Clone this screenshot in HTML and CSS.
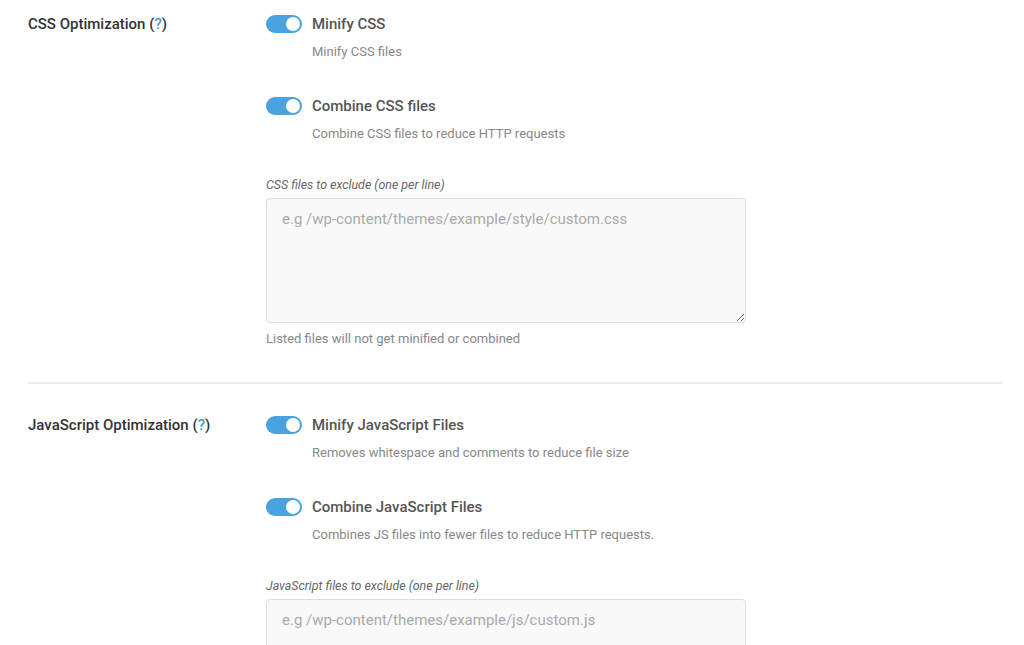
FILE: index.html
```html
<!doctype html>
<html>
    <head>
        <meta charset="utf-8">
        <title>Optimization settings</title>
        <link rel="stylesheet" href="styles.css">
    </head>
    <body>
        <div class="page">

            <section class="group first">
                <div class="group-label">CSS Optimization (<a href="#">?</a>)</div>
                <div class="group-body">
                    <div class="option">
                        <div class="option-head">
                            <span class="switch on"><span class="knob"></span></span>
                            <span class="option-title">Minify CSS</span>
                        </div>
                        <p class="option-desc">Minify CSS files</p>
                    </div>
                    <div class="option">
                        <div class="option-head">
                            <span class="switch on"><span class="knob"></span></span>
                            <span class="option-title">Combine CSS files</span>
                        </div>
                        <p class="option-desc">Combine CSS files to reduce HTTP requests</p>
                    </div>
                    <label class="field-label">CSS files to exclude (one per line)</label>
                    <textarea class="field" placeholder="e.g /wp-content/themes/example/style/custom.css"></textarea>
                    <p class="field-note">Listed files will not get minified or combined</p>
                </div>
            </section>

            <hr class="divider">

            <section class="group">
                <div class="group-label">JavaScript Optimization (<a href="#">?</a>)</div>
                <div class="group-body">
                    <div class="option">
                        <div class="option-head">
                            <span class="switch on"><span class="knob"></span></span>
                            <span class="option-title">Minify JavaScript Files</span>
                        </div>
                        <p class="option-desc">Removes whitespace and comments to reduce file size</p>
                    </div>
                    <div class="option">
                        <div class="option-head">
                            <span class="switch on"><span class="knob"></span></span>
                            <span class="option-title">Combine JavaScript Files</span>
                        </div>
                        <p class="option-desc">Combines JS files into fewer files to reduce HTTP requests.</p>
                    </div>
                    <label class="field-label">JavaScript files to exclude (one per line)</label>
                    <textarea class="field" placeholder="e.g /wp-content/themes/example/js/custom.js"></textarea>
                </div>
            </section>

        </div>
    </body>
</html>
```

FILE: styles.css
```css
*{
    margin: 0;
    padding: 0;
    box-sizing: border-box;
}
html,body{
    background: #fff;
    font-family: Roboto, "Liberation Sans", Arial, sans-serif;
    color: #333;
}
.page{
    padding: 0 22px 0 28px;
    height: 645px;
    overflow: hidden;
}
.group{
    display: flex;
    padding-top: 31px;
}
.group.first{
    padding-top: 14px;
}
.group-label{
    width: 238px;
    flex: none;
    font-size: 15px;
    font-weight: 500;
    line-height: 20px;
    color: #333;
}
.group-label a{
    color: #3a9ad9;
    text-decoration: none;
}
.group-body{
    flex: 1;
}
.option{
    margin-bottom: 35px;
}
.option-head{
    display: flex;
    align-items: center;
    gap: 10px;
    height: 20px;
}
.switch{
    position: relative;
    display: inline-block;
    width: 36px;
    height: 18px;
    border-radius: 9px;
    background: #4aa3df;
}
.switch .knob{
    position: absolute;
    top: 2px;
    right: 2px;
    width: 14px;
    height: 14px;
    border-radius: 50%;
    background: #fff;
}
.option-title{
    font-size: 15px;
    font-weight: 500;
    color: #555;
}
.option-desc{
    margin: 9px 0 0 46px;
    font-size: 13px;
    line-height: 18px;
    color: #888;
}
.option:nth-child(2){
    margin-bottom: 34px;
}
.field-label{
    display: block;
    font-size: 12.4px;
    font-style: italic;
    line-height: 16px;
    color: #666;
}
.field{
    display: block;
    margin-top: 5px;
    width: 480px;
    height: 125px;
    padding: 10px 15px;
    border: 1px solid #ddd;
    border-radius: 4px;
    background: #f9f9f9;
    font-family: Roboto, "Liberation Sans", Arial, sans-serif;
    font-size: 15px;
    line-height: 20px;
    color: #555;
    resize: vertical;
    outline: none;
}
.field::placeholder{
    color: #aaa;
}
.field-note{
    margin-top: 7px;
    font-size: 13px;
    line-height: 18px;
    color: #888;
}
.divider{
    margin-top: 34px;
    border: none;
    height: 2px;
    background: #ececec;
}
```
